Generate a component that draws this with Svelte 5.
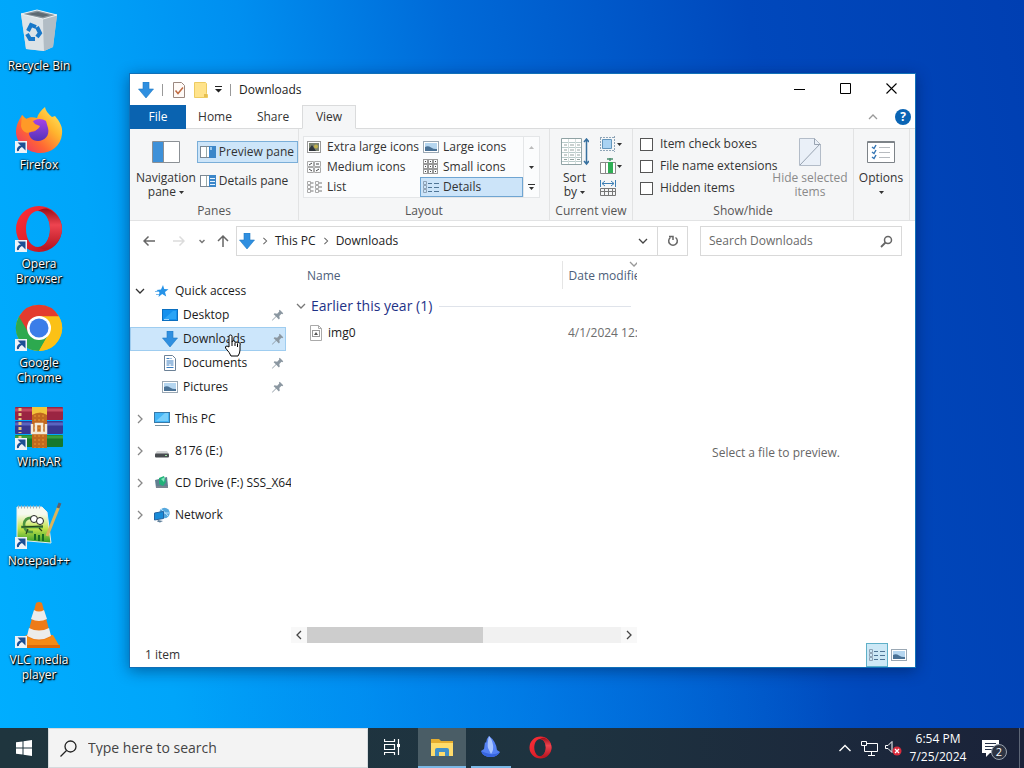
<script lang="ts">
	const shortcuts = [
		{ name: 'Recycle Bin', icon: 'bin', link: false },
		{ name: 'Firefox', icon: 'firefox', link: true },
		{ name: 'Opera Browser', icon: 'opera', link: true },
		{ name: 'Google Chrome', icon: 'chrome', link: true },
		{ name: 'WinRAR', icon: 'winrar', link: true },
		{ name: 'Notepad++', icon: 'notepad', link: true },
		{ name: 'VLC media player', icon: 'vlc', link: true }
	];

	const tabs = ['File', 'Home', 'Share', 'View'];

	const layouts = [
		{ name: 'Extra large icons', icon: 'xlarge' },
		{ name: 'Large icons', icon: 'picture' },
		{ name: 'Medium icons', icon: 'medium' },
		{ name: 'Small icons', icon: 'small' },
		{ name: 'List', icon: 'list' },
		{ name: 'Details', icon: 'details' }
	];

	const pinned = [
		{ name: 'Desktop', icon: 'desktop' },
		{ name: 'Downloads', icon: 'download' },
		{ name: 'Documents', icon: 'document' },
		{ name: 'Pictures', icon: 'picture' }
	];

	const places = [
		{ name: 'This PC', icon: 'pc' },
		{ name: '8176 (E:)', icon: 'drive' },
		{ name: 'CD Drive (F:) SSS_X64', icon: 'cd' },
		{ name: 'Network', icon: 'network' }
	];

	const files = [{ name: 'img0', date: '4/1/2024 12:08 AM' }];

	let activeTab = $state('View');
	let layout = $state('Details');
	let place = $state('Downloads');
	let previewPane = $state(true);
	let shown = $state({ 'Item check boxes': false, 'File name extensions': false, 'Hidden items': false });
	let fileQuery = $state('');
	let taskQuery = $state('');
</script>

{#snippet icon(name: string)}
	<svg class="icon" width="16" height="16" viewBox="0 0 16 16" fill="none" aria-hidden="true">
		{#if name === 'download'}
			<path d="M5 0h6v7h4.500L8 16 .500 7H5z" fill="#2f8fe0" stroke="#1f79c4" stroke-width=".6" />
		{:else if name === 'desktop'}
			<rect x=".5" y="2.500" width="15" height="11" fill="#1490ee" stroke="#0b6fc0" />
			<path d="M2 12l9-8h3v8z" fill="#2aa4f6" /><path d="M2 12.500h5" stroke="#9fd6ff" />
		{:else if name === 'document'}
			<path d="M2.500.500h8l3 3v12h-11z" fill="#fff" stroke="#6c8196" />
			<path d="M4.500 3.500h3M4.500 6h7M4.500 8h7M4.500 10h3M8.500 10h3M4.500 12.500h7M8.500 3.500h1" stroke="#3c7fc0" />
		{:else if name === 'picture'}
			<rect x=".5" y="2.500" width="15" height="11" fill="#fff" stroke="#9aa8b4" />
			<rect x="2" y="4" width="12" height="8" fill="#b5d6f0" />
			<path d="M2 8q3-1.500 6 .500t6 1.500v2H2z" fill="#4a7296" />
		{:else if name === 'xlarge'}
			<rect x=".5" y="2.500" width="13" height="11" fill="#fff" stroke="#999" />
			<rect x="2" y="4" width="10" height="8" fill="#7a8270" />
			<path d="M2 10l3-4 4 6H2z" fill="#30363c" /><circle cx="9" cy="7.500" r="2" fill="#c3b24a" />
		{:else if name === 'medium'}
			<path d="M.500 2.500h6v5h-6zM7.500 2.500h6v5h-6zM.500 8.500h6v5h-6zM7.500 8.500h6v5h-6z" stroke="#aaa" />
			<path d="M2 6l3-2M9 5h3M2 10l3 2M9 12l3-2" stroke="#444" />
		{:else if name === 'small'}
			{#each [0, 5, 10] as x}{#each [0, 5, 10] as y}
				<rect x={x + 0.5} y={y + 0.5} width="4" height="4" stroke="#999" />
				<rect x={x + 2} y={y + 2} width="1" height="1" fill="#444" />
			{/each}{/each}
		{:else if name === 'list'}
			<path d="M.500 2.500h3v3h-3zM.500 6.500h3v3h-3zM.500 10.500h3v3h-3zM8.500 2.500h3v3h-3zM8.500 6.500h3v3h-3zM8.500 10.500h3v3h-3z" stroke="#aaa" />
			<path d="M4 4h2.500M4 8h2.500M4 12h2.500M12 4h3M12 8h3M12 12h3" stroke="#777" />
		{:else if name === 'details'}
			<path d="M.500 2.500h3v3h-3zM.500 6.500h3v3h-3zM.500 10.500h3v3h-3z" stroke="#8fa2b5" />
			<path d="M5 4.500h4M5 8.500h4M5 12.500h4M11 4.500h5M11 8.500h5M11 12.500h5" stroke="#4f7596" />
		{:else if name === 'panepreview'}
			<rect x=".5" y="2.500" width="15" height="11" fill="#fff" stroke="#7b8894" />
			<path d="M6.500 3v10" stroke="#9aa" /><rect x="9" y="2" width="7" height="12" fill="#3c87c9" /><path d="M10 3h2v3h-2z" fill="#9bc9ee" />
		{:else if name === 'panedetails'}
			<rect x=".5" y="2.500" width="15" height="11" fill="#fff" stroke="#7b8894" />
			<path d="M6.500 3v10" stroke="#9aa" /><rect x="9" y="2" width="7" height="12" fill="#3c87c9" />
			<path d="M10 5.500h5M10 8.500h5M10 11.500h5" stroke="#e8f3ff" />
		{:else if name === 'check'}
			<path d="M2.500.500h8l3 3v12h-11z" fill="#fffaf7" stroke="#9b8880" />
			<path d="M4.500 8.500l2.500 3 5-6" stroke="#c06b42" stroke-width="1.500" />
		{:else if name === 'folder'}
			<path d="M1.500.500h11l1 1v10l1 1v3h-13z" fill="#ffe38b" stroke="#edcb61" /><path d="M11 12h3v3h-3z" fill="#e7bf4f" />
		{:else if name === 'star'}
			<path d="M9 2l1.200 4 4.300.300-3.500 2.700 1.200 4.500-4-2.500L4.500 14l1-4.500-3-2.500 4.500-.500z" fill="#2693e8" /><path d="M1 8.500h4M2 11.500h3" stroke="#7abbed" />
		{:else if name === 'pc'}
			<rect x=".5" y="1.500" width="15" height="10" fill="#43b5f7" stroke="#3779a8" />
			<path d="M2 10l9-8h3v8z" fill="#78cffc" /><path d="M1 14.500h14" stroke="#78909e" />
		{:else if name === 'drive'}
			<path d="M3 8h10l2 3H1z" fill="#d1d3d4" /><rect x="1" y="10.500" width="14" height="4" rx="1" fill="#484c50" /><path d="M11 12.500h2" stroke="#9be49d" />
		{:else if name === 'cd'}
			<path d="M1 5l12-3 1 9-12 2z" fill="#617f91" /><path d="M5 3l5-2 2 6-3 4-4-2z" fill="#21b179" /><path d="M7 4l4-2-1 5z" fill="#83ebbd" /><path d="M2 12h12" stroke="#79858f" stroke-width="2" />
		{:else if name === 'network'}
			<circle cx="10.500" cy="6" r="5.200" fill="#56a8dd" /><path d="M7 2q5 4 7 7M6 6h9" stroke="#bce5ff" /><path d="M.500 6l9-1.500v7l-9 1.500z" fill="#188bd8" stroke="#2563a0" /><path d="M4 13l5 1-3 1.500-3-1z" fill="#61809b" />
		{:else if name === 'file'}
			<path d="M2.500.500h8l3 3v12h-11z" fill="#fff" stroke="#aaa" /><path d="M10.500.500v3h3" stroke="#aaa" />
			<rect x="4.500" y="5.500" width="7" height="6" stroke="#999" /><path d="M6 10l2-3 2 3z" fill="#555" />
		{:else if name === 'pin'}
			<path d="M10 2l4 4-1 1-1-.500-2.500 2.500.500 3-1 1L6 10l-4 4-1 .500.500-1L5.500 9.500 3 7l1-1 3 .500L9.500 4 9 3z" fill="#8b97a1" />
		{/if}
	</svg>
{/snippet}

{#snippet chevron(dir: string)}
	<svg class="chev {dir}" width="10" height="10" viewBox="0 0 10 10" fill="none" aria-hidden="true">
		<path d="M1 3l4 4 4-4" stroke="currentColor" stroke-width="1.300" />
	</svg>
{/snippet}

{#snippet caret()}
	<svg class="caret" width="5" height="3" viewBox="0 0 5 3" aria-hidden="true"><path d="M0 0h5L2.500 3z" fill="currentColor" /></svg>
{/snippet}

{#snippet opera()}
	<defs>
		<linearGradient id="op" x1="0" y1="0" x2="1" y2="1">
			<stop offset="0" stop-color="#ff3038" /><stop offset=".5" stop-color="#e3222c" /><stop offset="1" stop-color="#a9101c" />
		</linearGradient>
		<linearGradient id="op2" x1="0" y1="0" x2="0" y2="1">
			<stop offset="0" stop-color="#9c0e18" /><stop offset=".4" stop-color="#ee4450" /><stop offset="1" stop-color="#b51520" />
		</linearGradient>
	</defs>
	<path fill-rule="evenodd" fill="url(#op)" d="M24 1a23 23 0 1 0 0 46 23 23 0 1 0 0-46zM23 6c7 0 12 8 12 18s-5 18-12 18-12-8-12-18S16 6 23 6z" />
	<path d="M23 6c3-2 7-3 10-2 8 3 14 11 14 20s-6 17-14 20c-4 1-7 0-10-2 7 0 12-8 12-18S30 6 23 6z" fill="url(#op2)" />
{/snippet}

{#snippet appIcon(name: string)}
	<svg width="48" height="48" viewBox="0 0 48 48" fill="none" aria-hidden="true">
		{#if name === 'bin'}
			<path d="M6 7l16-3 20 4-4 32-9 4-18-2z" fill="#c8ced2" />
			<path d="M6 7l22 4 1 33-18-2z" fill="#dce3e7" />
			<path d="M28 11l14-3-4 32-9 4z" fill="#b2bdc5" />
			<path d="M6 7l16-4 20 5-14 4z" fill="#8b979f" stroke="#eef3f5" />
			<path d="M12 7l11-2 12 3-7 2z" fill="#5d6a73" />
			<path d="M13 24l3-6 5 2M22 20l3 6-3 4M20 32h-5l-3-5" stroke="#1878c9" stroke-width="4" />
		{:else if name === 'firefox'}
			<defs>
				<linearGradient id="fx" x1="1" y1="0" x2="0" y2="1">
					<stop offset="0" stop-color="#fff36a" /><stop offset=".35" stop-color="#ffb52e" /><stop offset=".65" stop-color="#ff6534" /><stop offset="1" stop-color="#e6267a" />
				</linearGradient>
				<linearGradient id="fx2" x1="0" y1="0" x2="0" y2="1"><stop offset="0" stop-color="#a743e8" /><stop offset="1" stop-color="#5233b8" /></linearGradient>
			</defs>
			<path d="M7 9c2 2 3 3 4 4 3-2 7-2 11-1 1-4 4-8 8-11 1 5 4 7 7 10l3-1c5 6 8 11 7 18-1 12-11 19-22 19S1 38 1 26c0-7 3-12 6-17z" fill="url(#fx)" />
			<path d="M16 17c4-5 11-5 15-2l2 7c2 8-4 13-10 13s-10-5-9-10c4 2 7 0 9-3-4 0-6-2-7-5z" fill="url(#fx2)" />
			<path d="M7 9c3 4 6 5 10 5l3 4 5 2c-2 5-7 4-9 6-4 2-9 0-10-6z" fill="#ff9a27" />
		{:else if name === 'opera'}
			{@render opera()}
		{:else if name === 'chrome'}
			<circle cx="24" cy="24" r="23" fill="#fbc116" />
			<path d="M24 24L4 12.500A23 23 0 0 0 24 47l10-17.500z" fill="#2da94f" />
			<path d="M4 12.500A23 23 0 0 1 44 12.500H24L14 29.500z" fill="#e33b2e" />
			<path d="M34 29.500L24 47A23 23 0 0 0 44 12.500H24z" fill="#fbc116" />
			<circle cx="24" cy="24" r="12" fill="#fff" /><circle cx="24" cy="24" r="9.500" fill="#3b7de9" />
		{:else if name === 'winrar'}
			<rect y="4" width="48" height="13" rx="1" fill="#9b2542" /><path d="M0 7h48" stroke="#c24a62" stroke-width="3" />
			<rect y="18" width="48" height="13" rx="1" fill="#383891" /><path d="M0 21h48" stroke="#5a64c0" stroke-width="3" />
			<rect y="32" width="48" height="12" rx="1" fill="#16782d" /><path d="M0 34h48" stroke="#35a040" stroke-width="3" />
			<path d="M5 5v12M5 19v11M5 33v10" stroke="#eac77e" stroke-width="3" stroke-dasharray="3 2" />
			<rect x="17" y="4" width="15" height="41" fill="#c2691f" /><path d="M20 4v41M24 4v41M28 4v41" stroke="#e99b32" stroke-dasharray="2 2" />
			<path d="M17 4h15v8q-7-5-15 0z" fill="#f3c53b" /><path d="M17 21v9h14v-9M21 29v-8h6v8" stroke="#f3ead8" stroke-width="2.500" />
		{:else if name === 'notepad'}
			<defs><linearGradient id="np" x2="0" y2="1"><stop offset=".2" stop-color="#f6faef" /><stop offset=".6" stop-color="#c5e44a" /><stop offset="1" stop-color="#2f9a2a" /></linearGradient></defs>
			<path d="M2 5h25l5 5 4 31-34-3z" fill="url(#np)" stroke="#e8eded" /><path d="M3 5h24" stroke="#a3b0b6" stroke-width="3" stroke-dasharray="1 2" />
			<path d="M18 16q-8-1-9 6 0 9 9 8M6 25h22" stroke="#4c9440" stroke-width="2.500" /><path d="M7 25l21-1M13 27l-2 5M24 26l3 3" stroke="#243f1c" stroke-width="1.200" />
			<circle cx="19" cy="17" r="3.500" fill="#fff" stroke="#222" /><circle cx="25" cy="19" r="3.500" fill="#fff" stroke="#222" /><circle cx="20" cy="18" r="1" /><circle cx="25" cy="20" r="1" />
			<path d="M20 38v-6M24 39v-6M28 39v-7" stroke="#176c24" stroke-width="2" />
			<path d="M32 34L44 4" stroke="#dbb45a" stroke-width="3" /><path d="M43 6l2-5" stroke="#576274" stroke-width="3" />
		{:else if name === 'vlc'}
			<path d="M11 34h27l7 12H4z" fill="#f58a15" /><path d="M4 44h41v3H4z" fill="#dc6909" />
			<path d="M21 2q3-2 6 0l9 34q-12 7-24 0z" fill="#ee7b18" />
			<path d="M19 9q5 3 10 0l3 9q-8 4-16 0zM14 27q10 5 20 0l2 8q-12 7-24 0z" fill="#ececec" />
		{/if}
	</svg>
{/snippet}

<div class="screen">
	<main class="desktop">
		<nav class="shortcuts" aria-label="Desktop">
			{#each shortcuts as item}
				<a class="shortcut" href="#{item.icon}">
					<span class="art">
						{@render appIcon(item.icon)}
						{#if item.link}
							<svg class="arrow" width="12" height="12" viewBox="0 0 12 12" fill="none" aria-hidden="true">
								<rect width="12" height="12" fill="#eef3f8" />
								<path d="M3 10q-1-4 4-5M5 2.500h4.500V7z" stroke="#1c4f94" stroke-width="2" fill="#1c4f94" />
							</svg>
						{/if}
					</span>
					<span class="name">{item.name}</span>
				</a>
			{/each}
		</nav>

		<section class="window" aria-label="Downloads">
			<header class="titlebar">
				{@render icon('download')}
				<i class="bar"></i>
				<button class="plain" aria-label="Properties">{@render icon('check')}</button>
				<button class="plain" aria-label="New folder">{@render icon('folder')}</button>
				<button class="plain" aria-label="Customize toolbar">
					<svg width="7" height="7" viewBox="0 0 7 7"><path d="M0 0h7v1H0zM0 3h7L3.500 6.500z" fill="#222" /></svg>
				</button>
				<i class="bar"></i>
				<h1>Downloads</h1>
				<div class="controls">
					<button aria-label="Minimize"><svg width="11" height="11" viewBox="0 0 11 11"><path d="M0 6.500h11" stroke="#000" /></svg></button>
					<button aria-label="Maximize"><svg width="11" height="11" viewBox="0 0 11 11"><path d="M.500.500h10v10H.500z" fill="none" stroke="#000" /></svg></button>
					<button aria-label="Close"><svg width="11" height="11" viewBox="0 0 11 11"><path d="M.500.500l10 10M10.500.500l-10 10" stroke="#000" stroke-width="1.100" /></svg></button>
				</div>
			</header>

			<div class="tabs">
				{#each tabs as tab}
					<button class="tab" class:file={tab === 'File'} class:active={tab === activeTab} onclick={() => (activeTab = tab)}>{tab}</button>
				{/each}
				<span class="help">
					<button class="plain fold" aria-label="Minimize the ribbon">{@render chevron('up')}</button>
					<button class="round" aria-label="Help">?</button>
				</span>
			</div>

			<div class="ribbon">
				<section class="group">
					<div class="tools">
						<button class="big">
							<span class="pic">
								<svg width="28" height="22" viewBox="0 0 28 22"><path d="M.500.500h27v21H.500z" fill="#fff" stroke="#8b9095" /><path d="M1 1h10v20H1z" fill="#3e91d9" /><path d="M11.500 1v20" stroke="#8b9095" /></svg>
							</span>
							<span>Navigation<br />pane {@render caret()}</span>
						</button>
						<div class="panes">
							<button class="pane" class:on={previewPane} onclick={() => (previewPane = !previewPane)}>{@render icon('panepreview')}Preview pane</button>
							<button class="pane">{@render icon('panedetails')}Details pane</button>
						</div>
					</div>
					<h2>Panes</h2>
				</section>

				<section class="group">
					<div class="tools">
						<div class="gallery">
							<div class="choices">
								{#each layouts as item}
									<button class="choice" class:on={layout === item.name} onclick={() => (layout = item.name)}>{@render icon(item.icon)}{item.name}</button>
								{/each}
							</div>
							<div class="spin">
								<button class="dim" aria-label="Previous row"><span class="flip">{@render caret()}</span></button>
								<button aria-label="Next row">{@render caret()}</button>
								<button aria-label="More layouts"><svg width="7" height="7" viewBox="0 0 7 7"><path d="M0 0h7v1H0zM1 3h5L3.500 6z" fill="#333" /></svg></button>
							</div>
						</div>
					</div>
					<h2>Layout</h2>
				</section>

				<section class="group">
					<div class="tools">
						<button class="big sort">
							<span class="pic">
								<svg width="28" height="28" viewBox="0 0 28 28" fill="none"><path d="M.500.500h20v26H.500z" fill="#fff" stroke="#8fa2a4" /><path d="M1 4.500h19M1 9.500h19M1 14.500h19M1 19.500h19M1 23.500h19" stroke="#b9cbca" /><path d="M7.500 1v25M14.500 1v25" stroke="#d5dfdd" /><path d="M3 7h3M9 7h4M16 7h3M3 12h3M9 12h4M16 12h3M3 17h3M9 17h4M16 17h3M3 21.500h3M9 21.500h4M16 21.500h3" stroke="#95a3a0" /><path d="M25.500 2v23M23 4l2.500-3L28 4M23 23l2.500 3 2.500-3" stroke="#37709f" stroke-width="1.500" /></svg>
							</span>
							<span>Sort<br />by {@render caret()}</span>
						</button>
						<div class="minis">
							<button aria-label="Group by"><svg width="16" height="16" viewBox="0 0 16 16" fill="none"><path d="M2.500 3.500h9v9h-9z" fill="#a9d2f2" stroke="#6496bc" /><path d="M0 1.500h14M0 14.500h14M.500 2v13M14.500 0v16" stroke="#8fa5b8" stroke-dasharray="2 1" /></svg>{@render caret()}</button>
							<button aria-label="Add columns"><svg width="16" height="16" viewBox="0 0 16 16" fill="none"><path d="M.500 4.500h15v11H.500zM5.500 5v10" fill="#fff" stroke="#888" /><path d="M8 4h5v11H8z" fill="#2fae55" /><path d="M7 1h6M10 0v3" stroke="#4d8f70" stroke-width="1.500" /></svg>{@render caret()}</button>
							<button aria-label="Size all columns to fit"><svg width="16" height="16" viewBox="0 0 16 16" fill="none"><path d="M.500 0v7M15.500 0v7M2 3.500h12M5 1L2 3.500 5 6M11 1l3 2.500L11 6" stroke="#3d7fb5" /><path d="M.500 8.500h15v7H.500zM1 11.500h15M4.500 9v6M8.500 9v6M12.500 9v6" stroke="#777" /></svg></button>
						</div>
					</div>
					<h2>Current view</h2>
				</section>

				<section class="group">
					<div class="tools">
						<div class="checks">
							{#each Object.keys(shown) as key}
								<label><input type="checkbox" bind:checked={shown[key]} />{key}</label>
							{/each}
						</div>
						<button class="big hide" disabled>
							<span class="pic">
								<svg width="22" height="28" viewBox="0 0 22 28" fill="none"><path d="M.500.500h15l6 6v21H.500z" fill="#eaf0f8" stroke="#b3bcc8" /><path d="M15.500.500v6h6M1 27L21 6" stroke="#98a3b1" /></svg>
							</span>
							<span>Hide selected<br />items</span>
						</button>
					</div>
					<h2>Show/hide</h2>
				</section>

				<section class="group">
					<div class="tools">
						<button class="big options">
							<span class="pic">
								<svg width="28" height="22" viewBox="0 0 28 22" fill="none"><path d="M.500.500h27v21H.500z" fill="#fff" stroke="#7d8388" /><path d="M1 1.500h26" stroke="#7d8388" /><path d="M5 6l2 1.500L9 4M5 11l2 1.500L9 9M5 16l2 1.500L9 14" stroke="#3677b5" stroke-width="1.500" /><path d="M12 6.500h11M12 11.500h11M12 16.500h11" stroke="#b8bcc0" /></svg>
							</span>
							<span>Options<br />{@render caret()}</span>
						</button>
					</div>
				</section>
			</div>

			<div class="address">
				<button class="plain go" aria-label="Back"><svg width="12" height="12" viewBox="0 0 12 12" fill="none"><path d="M12 6H1M5.500 1.500L1 6l4.500 4.500" stroke="#666" stroke-width="1.500" /></svg></button>
				<button class="plain go" aria-label="Forward"><svg width="12" height="12" viewBox="0 0 12 12" fill="none"><path d="M0 6h11M6.500 1.500L11 6l-4.500 4.500" stroke="#dcdcdc" stroke-width="1.500" /></svg></button>
				<button class="plain recent" aria-label="Recent locations"><svg width="6" height="5" viewBox="0 0 6 5" fill="none"><path d="M.500 1L3 3.500 5.500 1" stroke="#777" stroke-width="1.500" /></svg></button>
				<button class="plain up" aria-label="Up"><svg width="12" height="14" viewBox="0 0 12 14" fill="none"><path d="M6 13V2M1 7l5-5 5 5" stroke="#666" stroke-width="1.500" /></svg></button>
				<div class="path">
					{@render icon('download')}
					<span class="sep">{@render chevron('right')}</span>
					<a href="#pc">This PC</a>
					<span class="sep">{@render chevron('right')}</span>
					<a href="#downloads">Downloads</a>
					<button class="plain drop" aria-label="Previous locations">{@render chevron('down')}</button>
				</div>
				<button class="plain refresh" aria-label="Refresh"><svg width="12" height="12" viewBox="0 0 12 12" fill="none"><path d="M8.500 2.500A4.300 4.300 0 1 1 3.500 2.500M2 1.500h4V5" stroke="#666" stroke-width="1.500" /></svg></button>
				<label class="find">
					<input type="text" placeholder="Search Downloads" aria-label="Search Downloads" bind:value={fileQuery} />
					<svg width="13" height="13" viewBox="0 0 13 13" fill="none"><circle cx="8" cy="5" r="3.500" stroke="#666" stroke-width="1.500" /><path d="M5.500 7.500L1 12" stroke="#666" stroke-width="1.800" /></svg>
				</label>
			</div>

			<div class="body">
				<nav class="tree" aria-label="Folders">
					<a class="node" href="#quick"><span class="twist open">{@render chevron('down')}</span>{@render icon('star')}Quick access</a>
					{#each pinned as item}
						<a class="node child" class:on={place === item.name} href="#{item.icon}" onclick={() => (place = item.name)}>
							{@render icon(item.icon)}{item.name}<span class="pin">{@render icon('pin')}</span>
						</a>
					{/each}
					{#each places as item}
						<a class="node root" href="#{item.icon}"><span class="twist">{@render chevron('right')}</span>{@render icon(item.icon)}{item.name}</a>
					{/each}
				</nav>

				<div class="list">
					<div class="rows">
						<table>
							<thead>
								<tr><th class="colname">Name</th><th class="coldate"><span class="sorted">{@render chevron('down')}</span>Date modified</th></tr>
							</thead>
							<tbody>
								<tr><td colspan="2"><div class="when">{@render chevron('down')}Earlier this year ({files.length})<i></i></div></td></tr>
								{#each files as file}
									<tr class="entry"><td><span class="filename">{@render icon('file')}{file.name}</span></td><td class="date">{file.date}</td></tr>
								{/each}
							</tbody>
						</table>
					</div>
					<div class="scroll">
						<button class="plain" aria-label="Scroll left">{@render chevron('left')}</button>
						<div class="track"><div class="thumb"></div></div>
						<button class="plain" aria-label="Scroll right">{@render chevron('right')}</button>
					</div>
				</div>

				<aside class="preview">Select a file to preview.</aside>
			</div>

			<footer class="status">
				<span>{files.length} item</span>
				<span class="modes">
					<button class="on" aria-label="Details view">{@render icon('details')}</button>
					<button aria-label="Thumbnail view">{@render icon('picture')}</button>
				</span>
			</footer>

			<svg class="pointer" width="17" height="23" viewBox="0 0 17 23" aria-hidden="true">
				<path d="M5 13V2.500a1.500 1.500 0 0 1 3 0V8a1.500 1.500 0 0 1 3 .500 1.500 1.500 0 0 1 2.500.800A1.500 1.500 0 0 1 16 11v5q0 3-2 6H7q-1-3-5.500-8-.500-2 1.500-2z" fill="#fff" stroke="#000" />
				<path d="M8 8v4M11 9v3M13.500 10v3" stroke="#000" />
			</svg>
		</section>
	</main>

	<footer class="taskbar">
		<button class="plain start" aria-label="Start"><svg width="16" height="16" viewBox="0 0 16 16"><path d="M0 2.300l6.500-.900v6.100H0zM7.500 1.200L16 0v7.500H7.500zM0 8.500h6.500v6.100L0 13.700zM7.500 8.500H16V16l-8.500-1.200z" fill="#fff" /></svg></button>
		<label class="search">
			<svg width="17" height="17" viewBox="0 0 17 17" fill="none"><circle cx="10.500" cy="6.500" r="5.500" stroke="#222" stroke-width="1.300" /><path d="M6.500 10.500L.500 16.500" stroke="#222" stroke-width="1.300" /></svg>
			<input type="text" placeholder="Type here to search" aria-label="Type here to search" bind:value={taskQuery} />
		</label>
		<button class="task" aria-label="Task View"><svg width="17" height="16" viewBox="0 0 17 16" fill="none"><path d="M.500 0v2.500h10V0M.500 16v-2.500h10V16M.500 5.500h10v5H.500zM14.500 0v16" stroke="#fff" stroke-width="1.200" /><path d="M13 5h3v3h-3z" fill="#fff" /></svg></button>
		<button class="task open current" aria-label="File Explorer"><svg width="22" height="18" viewBox="0 0 22 18"><path d="M0 1h8l2 2h12v15H0z" fill="#e6ad2f" /><path d="M0 5h22v13H0z" fill="#ffdc6b" /><path d="M4 18v-6q0-2 2-2h10q2 0 2 2v6h-4v-4H8v4z" fill="#4390c8" /></svg></button>
		<button class="task open small" aria-label="Wave"><svg width="22" height="22" viewBox="0 0 22 22"><path d="M9 0q7 5 8 14l3 2q-3 5-9 5-8 0-10-6l3-2 1-7 1 1q0-4 3-7z" fill="#5582f4" /><path d="M9 0q-2 8-1 12l3 6q3-4 2-9-1-6-4-9z" fill="#a8c4ff" /><path d="M1 15q4 2 9 3 5 1 10-2-3 5-9 5-8 0-10-6z" fill="#3765df" /></svg></button>
		<button class="task" aria-label="Opera"><svg width="23" height="23" viewBox="0 0 48 48">{@render opera()}</svg></button>
		<div class="tray">
			<button aria-label="Show hidden icons"><svg width="12" height="8" viewBox="0 0 12 8" fill="none"><path d="M.500 7L6 1.500 11.500 7" stroke="#fff" stroke-width="1.400" /></svg></button>
			<button aria-label="Network"><svg width="17" height="15" viewBox="0 0 17 15" fill="none"><path d="M5 2.500h11.500v8H5M3.500 5v5.500H5M10.500 11v3M7 14.500h7" stroke="#fff" /><path d="M.500.500h5v4h-5z" stroke="#fff" /></svg></button>
			<button aria-label="Volume muted"><svg width="17" height="16" viewBox="0 0 17 16" fill="none"><path d="M.500 5.500H3l4-4v11l-4-4H.500z" stroke="#fff" /><circle cx="12" cy="11" r="4.500" fill="#d92b3c" /><path d="M10 9l4 4M14 9l-4 4" stroke="#fff" stroke-width="1.300" /></svg></button>
			<time datetime="2024-07-25T18:54">6:54 PM<br />7/25/2024</time>
			<button class="notes" aria-label="Notifications">
				<svg width="17" height="17" viewBox="0 0 17 17"><path d="M0 0h17v13H8l-4 4v-4H0z" fill="#fff" /><path d="M3 3.500h11M3 6.500h11M3 9.500h7" stroke="#26324a" /></svg>
				<span class="count">2</span>
			</button>
			<i class="peek"></i>
		</div>
	</footer>
</div>

<style>
	:global(body) {
		margin: 0;
	}
	.screen {
		height: 100vh;
		display: flex;
		flex-direction: column;
		overflow: hidden;
		font: 12px/16px "Open Sans", "Noto Sans", sans-serif;
		color: #1b1b1b;
		background:
			radial-gradient(ellipse at 50% 100%, rgba(0, 140, 245, 0.4), transparent 45%),
			linear-gradient(80deg, #00aeff 0%, #00a5fa 16%, #008ff0 32%, #006ad8 50%, #0048bc 76%, #003fb2 100%);
	}
	.screen * {
		box-sizing: border-box;
	}
	button, input {
		font: inherit;
		color: inherit;
	}
	button {
		border: 0;
		padding: 0;
		background: none;
	}
	a {
		color: inherit;
		text-decoration: none;
	}
	h1, h2 {
		margin: 0;
		font-size: 12px;
		font-weight: 400;
	}
	svg {
		flex-shrink: 0;
	}
	.desktop {
		position: relative;
		flex: 1;
		min-height: 0;
	}
	.shortcuts {
		width: 78px;
		padding-top: 7px;
	}
	.shortcut {
		height: 99px;
		display: flex;
		flex-direction: column;
		align-items: center;
		gap: 3px;
		color: #fff;
		text-align: center;
		text-shadow: 1px 1px 2px #000, 1px 1px 1px #000, 0 0 2px #000;
		line-height: 15px;
	}
	.art {
		position: relative;
		height: 48px;
	}
	.art > svg:first-child {
		display: block;
	}
	.arrow {
		position: absolute;
		left: 0;
		bottom: 1px;
	}
	.window {
		position: absolute;
		top: 73px;
		left: 129px;
		right: 108px;
		bottom: 60px;
		display: flex;
		flex-direction: column;
		background: #fff;
		border: 1px solid #1070b8;
		box-shadow: 0 3px 14px rgba(0, 20, 60, 0.45);
	}
	.titlebar {
		height: 31px;
		display: flex;
		align-items: center;
		gap: 8px;
		padding-left: 8px;
	}
	.plain {
		display: inline-flex;
		align-items: center;
		justify-content: center;
	}
	.titlebar .plain + .plain {
		margin-left: -2px;
	}
	.bar {
		width: 1px;
		height: 12px;
		background: #999;
	}
	.controls {
		margin-left: auto;
		display: flex;
		align-self: stretch;
	}
	.controls button {
		width: 46px;
	}
	.controls button:last-child {
		margin-right: 1px;
	}
	.tabs {
		height: 24px;
		display: flex;
		border-bottom: 1px solid #dadbdc;
	}
	.tab {
		width: 58px;
		height: 24px;
		border: 1px solid transparent;
		color: #333;
	}
	.tab.file {
		width: 56px;
		background: #0a63b0;
		color: #fff;
	}
	.tab.active {
		width: 54px;
		background: #f5f6f7;
		border-color: #dadbdc;
		border-bottom-color: #f5f6f7;
	}
	.help {
		margin-left: auto;
		display: flex;
		align-items: center;
		gap: 9px;
		padding-right: 4px;
	}
	.fold {
		color: #999;
	}
	.round {
		width: 16px;
		height: 16px;
		border-radius: 50%;
		background: #0a64b4;
		color: #fff;
		font-weight: 700;
	}
	.ribbon {
		height: 92px;
		display: grid;
		grid-template-columns: 169px 251px 83px 221px 56px;
		background: #f5f6f7;
		border-bottom: 1px solid #e2e3e4;
		color: #333;
	}
	.group {
		display: flex;
		flex-direction: column;
		border-right: 1px solid #e2e3e4;
	}
	.tools {
		flex: 1;
		display: flex;
	}
	.group h2 {
		height: 17px;
		text-align: center;
		color: #555;
	}
	.big {
		width: 72px;
		display: flex;
		flex-direction: column;
		align-items: center;
		line-height: 14px;
		white-space: nowrap;
	}
	.pic {
		height: 42px;
		padding-top: 4px;
		display: flex;
		align-items: center;
	}
	.big.sort {
		width: 49px;
	}
	.big.hide {
		width: 82px;
		color: #8a8a8a;
	}
	.big.options {
		width: 54px;
	}
	.caret {
		vertical-align: middle;
	}
	.panes {
		display: flex;
		flex-direction: column;
		gap: 7px;
		padding-top: 12px;
		margin-left: -5px;
	}
	.pane {
		height: 22px;
		display: flex;
		align-items: center;
		gap: 3px;
		padding: 0 3px 0 2px;
		border: 1px solid transparent;
		white-space: nowrap;
	}
	.pane.on {
		background: #cde5f9;
		border-color: #7aaed8;
	}
	.gallery {
		flex: 1;
		height: 62px;
		margin: 7px 9px 0 4px;
		display: flex;
		background: #fbfcfd;
		border: 1px solid #e4e6e8;
	}
	.choices {
		flex: 1;
		display: grid;
		grid-template-columns: 1fr 1fr;
		grid-auto-rows: 20px;
	}
	.choice {
		display: flex;
		align-items: center;
		gap: 4px;
		padding-left: 2px;
		border: 1px solid transparent;
		white-space: nowrap;
	}
	.choice.on {
		background: #cce4f9;
		border-color: #6fa5d2;
	}
	.spin {
		width: 16px;
		display: flex;
		flex-direction: column;
		border-left: 1px solid #e4e6e8;
	}
	.spin button {
		flex: 1;
		display: flex;
		align-items: center;
		justify-content: center;
	}
	.spin .dim {
		color: #bbb;
	}
	.flip {
		display: flex;
		transform: rotate(180deg);
	}
	.minis {
		display: flex;
		flex-direction: column;
		gap: 6px;
		padding: 7px 0 0 1px;
	}
	.minis button {
		height: 16px;
		display: flex;
		align-items: center;
		gap: 1px;
	}
	.checks {
		width: 136px;
		display: flex;
		flex-direction: column;
		gap: 6px;
		padding: 7px 0 0 7px;
	}
	.checks label {
		display: flex;
		align-items: center;
		gap: 7px;
		white-space: nowrap;
	}
	.checks input {
		appearance: none;
		flex-shrink: 0;
		width: 13px;
		height: 13px;
		margin: 0;
		border: 1px solid #555;
		background: #fff;
	}
	.checks input:checked {
		background: #0a63b0;
	}
	.address {
		height: 40px;
		display: flex;
		align-items: center;
		padding: 0 13px 0 4px;
		color: #222;
	}
	.go {
		width: 30px;
	}
	.recent {
		width: 16px;
	}
	.up {
		width: 26px;
	}
	.path {
		flex: 1;
		height: 30px;
		display: flex;
		align-items: center;
		border: 1px solid #d9d9d9;
		padding-left: 2px;
	}
	.sep {
		width: 20px;
		display: flex;
		justify-content: center;
		color: #666;
	}
	.sep .chev {
		width: 8px;
	}
	.drop {
		margin-left: auto;
		width: 28px;
		color: #444;
	}
	.refresh {
		width: 31px;
		height: 30px;
		margin-left: -1px;
		border: 1px solid #d9d9d9;
	}
	.find {
		width: 202px;
		height: 30px;
		margin-left: 12px;
		padding: 0 8px;
		display: flex;
		align-items: center;
		border: 1px solid #d9d9d9;
	}
	.find input, .search input {
		flex: 1;
		min-width: 0;
		padding: 0;
		border: 0;
		outline: 0;
		background: none;
	}
	.find input::placeholder {
		color: #6a6a6a;
		opacity: 1;
	}
	.chev.up {
		transform: rotate(180deg);
	}
	.chev.right {
		transform: rotate(-90deg);
	}
	.chev.left {
		transform: rotate(90deg);
	}
	.body {
		flex: 1;
		min-height: 0;
		display: flex;
	}
	.tree {
		width: 161px;
		padding-top: 18px;
		overflow: hidden;
	}
	.node {
		height: 24px;
		display: flex;
		align-items: center;
		white-space: nowrap;
		gap: 5px;
		border: 1px solid transparent;
	}
	.twist {
		width: 18px;
		flex-shrink: 0;
		display: flex;
		justify-content: center;
		color: #888;
	}
	.twist.open {
		color: #333;
	}
	.node.child {
		width: 156px;
		padding-left: 31px;
	}
	.node.child.on {
		background: #cce6fb;
		border-color: #9fcdf0;
	}
	.pin {
		margin-left: auto;
		display: flex;
	}
	.pin .icon {
		width: 14px;
	}
	.node.root {
		margin-top: 8px;
	}
	.list {
		flex: 1;
		min-width: 0;
		display: flex;
		flex-direction: column;
	}
	.rows {
		flex: 1;
		overflow: hidden;
	}
	table {
		width: 415px;
		table-layout: fixed;
		border-collapse: collapse;
	}
	th {
		position: relative;
		height: 28px;
		padding: 2px 0 0 6px;
		font-weight: 400;
		text-align: left;
		color: #4c607a;
	}
	.colname {
		width: 271px;
		padding-left: 16px;
		border-right: 1px solid #e5e5e5;
	}
	.sorted {
		position: absolute;
		top: -4px;
		left: 66px;
		color: #999;
	}
	td {
		padding: 0;
	}
	.when {
		width: 340px;
		height: 34px;
		display: flex;
		align-items: center;
		gap: 5px;
		padding-left: 5px;
		font-size: 14px;
		white-space: nowrap;
		color: #1e3287;
	}
	.when .chev {
		color: #777;
	}
	.when i {
		flex: 1;
		height: 1px;
		margin-left: 2px;
		background: #dfe3ea;
	}
	.entry td {
		height: 20px;
	}
	.filename {
		display: flex;
		align-items: center;
		gap: 4px;
		padding-left: 17px;
	}
	td.date {
		padding-left: 6px;
		color: #6d6d6d;
		white-space: nowrap;
	}
	.scroll {
		height: 16px;
		display: flex;
		background: #f1f1f1;
	}
	.scroll button {
		width: 16px;
		background: #f8f8f8;
		color: #444;
	}
	.track {
		flex: 1;
	}
	.thumb {
		width: 56%;
		height: 16px;
		background: #cdcdcd;
	}
	.preview {
		width: 278px;
		display: flex;
		align-items: center;
		justify-content: center;
		padding-top: 2px;
		color: #666;
	}
	.status {
		height: 24px;
		display: flex;
		align-items: center;
		padding-left: 15px;
		color: #333;
	}
	.modes {
		margin-left: auto;
		display: flex;
		padding-right: 5px;
	}
	.modes button {
		width: 22px;
		height: 24px;
		display: flex;
		align-items: center;
		justify-content: center;
	}
	.modes .on {
		background: #cce8f6;
		border: 1px solid #5fb0c8;
	}
	.pointer {
		position: absolute;
		left: 94px;
		top: 260px;
	}
	.taskbar {
		height: 40px;
		display: flex;
		color: #fff;
		background: linear-gradient(90deg, #1f353e, #1e3340 55%, #1a2239);
	}
	.start {
		width: 48px;
	}
	.search {
		width: 320px;
		display: flex;
		align-items: center;
		gap: 11px;
		padding-left: 11px;
		background: #f3f3f3;
		border: 1px solid #d5dadd;
		font-size: 14px;
		color: #333;
	}
	.search input::placeholder {
		color: #444;
		opacity: 1;
	}
	.task {
		width: 48px;
		margin-right: 2px;
		display: flex;
		align-items: center;
		justify-content: center;
		border-bottom: 2px solid transparent;
	}
	.task.open {
		border-bottom-color: #7bb8e6;
	}
	.task.small {
		width: 40px;
		margin: 0 5px 0 3px;
	}
	.task.current {
		background: #4a5d66;
	}
	.tray {
		margin-left: auto;
		display: flex;
		align-items: center;
	}
	.tray button {
		width: 24px;
		display: flex;
		justify-content: center;
	}
	time {
		width: 66px;
		text-align: center;
		line-height: 18px;
	}
	.tray .notes {
		position: relative;
		width: 48px;
		padding-right: 10px;
	}
	.count {
		position: absolute;
		left: 20px;
		top: 4px;
		width: 16px;
		height: 16px;
		border: 1px solid #9aa3ae;
		border-radius: 50%;
		background: #2d3443;
		font-size: 11px;
		line-height: 14px;
	}
	.peek {
		width: 5px;
		height: 40px;
		border-left: 1px solid #5d6676;
	}
</style>
